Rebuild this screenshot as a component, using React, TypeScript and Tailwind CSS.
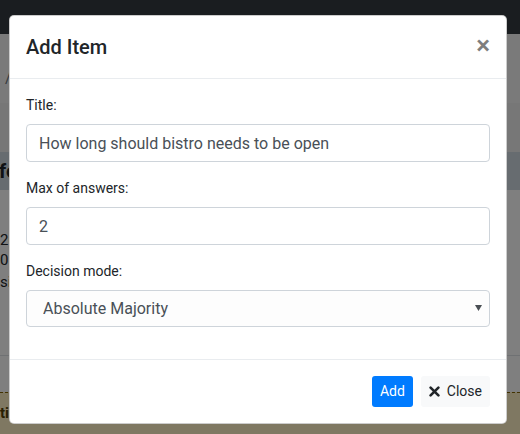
import { useState } from 'react'

const font = "font-['Segoe_UI',Roboto,Arial,sans-serif]"

// page that sits behind the modal backdrop
function BackgroundPage() {
  return (
    <div className="flex flex-col h-full">
      <div className="h-[34px] bg-[#343a40] shrink-0" />
      <div className="h-[69px] bg-[#f4f4f4] shrink-0 pt-[34px] pl-[5px] text-[16px] text-[#6c757d] leading-[20px]">/</div>
      <div className="h-[49px] bg-[#eeeeee] shrink-0" />
      <div className="h-[38px] bg-[#cfd9e1] shrink-0 flex items-center -ml-[1px] text-[20px] font-bold text-[#212529]">fe</div>
      <div className="h-[165px] bg-white shrink-0 pt-[40px] text-[15px] leading-[20px] text-[#212529]">
        <div>20</div>
        <div>01</div>
        <div className="mt-[2px]">si</div>
      </div>
      <div className="h-[37px] bg-white border-t border-[#dee2e6] shrink-0" />
      <div className="flex-1 bg-[#fff0c4] border-t border-dashed border-[#856404] pt-[9px] text-[15px] font-bold text-[#533f03]">tic</div>
    </div>
  )
}

export default function App() {
  const [title, setTitle] = useState('How long should bistro needs to be open')
  const [maxAnswers, setMaxAnswers] = useState('2')
  const [mode, setMode] = useState('Absolute Majority')

  return (
    <main className={`relative w-[520px] h-[434px] overflow-hidden bg-white ${font}`}>
      <BackgroundPage />

      {/* Backdrop */}
      <div className="absolute inset-0 bg-black/50" />

      {/* Modal */}
      <div className="absolute left-[9px] top-[15px] w-[498px] bg-white rounded-[5px] border border-black/20 flex flex-col text-[#212529]">
        <div className="flex items-start justify-between p-4 border-b border-[#e9ecef]">
          <h5 className="text-[20px] leading-[30px] font-medium">Add Item</h5>
          <button className="p-4 -m-4 ml-auto text-[26px] font-semibold leading-none text-black opacity-50">
            ×
          </button>
        </div>

        <div className="p-4 flex flex-col text-[14px]">
          <div className="mb-4 flex flex-col">
            <label className="mb-2 leading-[21px]">Title:</label>
            <input
              value={title}
              onChange={(e) => setTitle(e.target.value)}
              className="h-[38px] px-3 border border-[#ced4da] rounded-[4px] text-[16px] text-[#495057] outline-none"
            />
          </div>
          <div className="mb-4 flex flex-col">
            <label className="mb-2 leading-[21px]">Max of answers:</label>
            <input
              value={maxAnswers}
              onChange={(e) => setMaxAnswers(e.target.value)}
              className="h-[38px] px-3 border border-[#ced4da] rounded-[4px] text-[16px] text-[#495057] outline-none"
            />
          </div>
          <div className="mb-4 flex flex-col">
            <label className="mb-2 leading-[21px]">Decision mode:</label>
            <div className="relative">
              <select
                value={mode}
                onChange={(e) => setMode(e.target.value)}
                className="w-full h-[37px] pl-4 pr-8 border border-[#ced4da] rounded-[4px] text-[16px] text-[#495057] bg-[#fdfdfd] appearance-none outline-none"
              >
                <option>Absolute Majority</option>
                <option>Relative Majority</option>
              </select>
              <svg className="absolute right-[8px] top-[15px] pointer-events-none" width="7" height="6" viewBox="0 0 7 6">
                <path d="M0 0 H7 L3.5 6 Z" fill="#4a4f54" />
              </svg>
            </div>
          </div>
        </div>

        <div className="flex items-center justify-end p-3 border-t border-[#e9ecef] text-[14px]">
          <button className="m-1 h-[31px] px-2 rounded-[3px] bg-[#007bff] text-white leading-[21px]">Add</button>
          <button className="m-1 h-[31px] px-2 rounded-[3px] bg-[#f8f9fa] text-[#212529] leading-[21px] flex items-center gap-[7px]">
            <svg width="11" height="11" viewBox="0 0 11 11">
              <path d="M1.6 1.6 L9.4 9.4 M9.4 1.6 L1.6 9.4" stroke="#212529" strokeWidth="2.6" strokeLinecap="round" />
            </svg>
            Close
          </button>
        </div>
      </div>
    </main>
  )
}
